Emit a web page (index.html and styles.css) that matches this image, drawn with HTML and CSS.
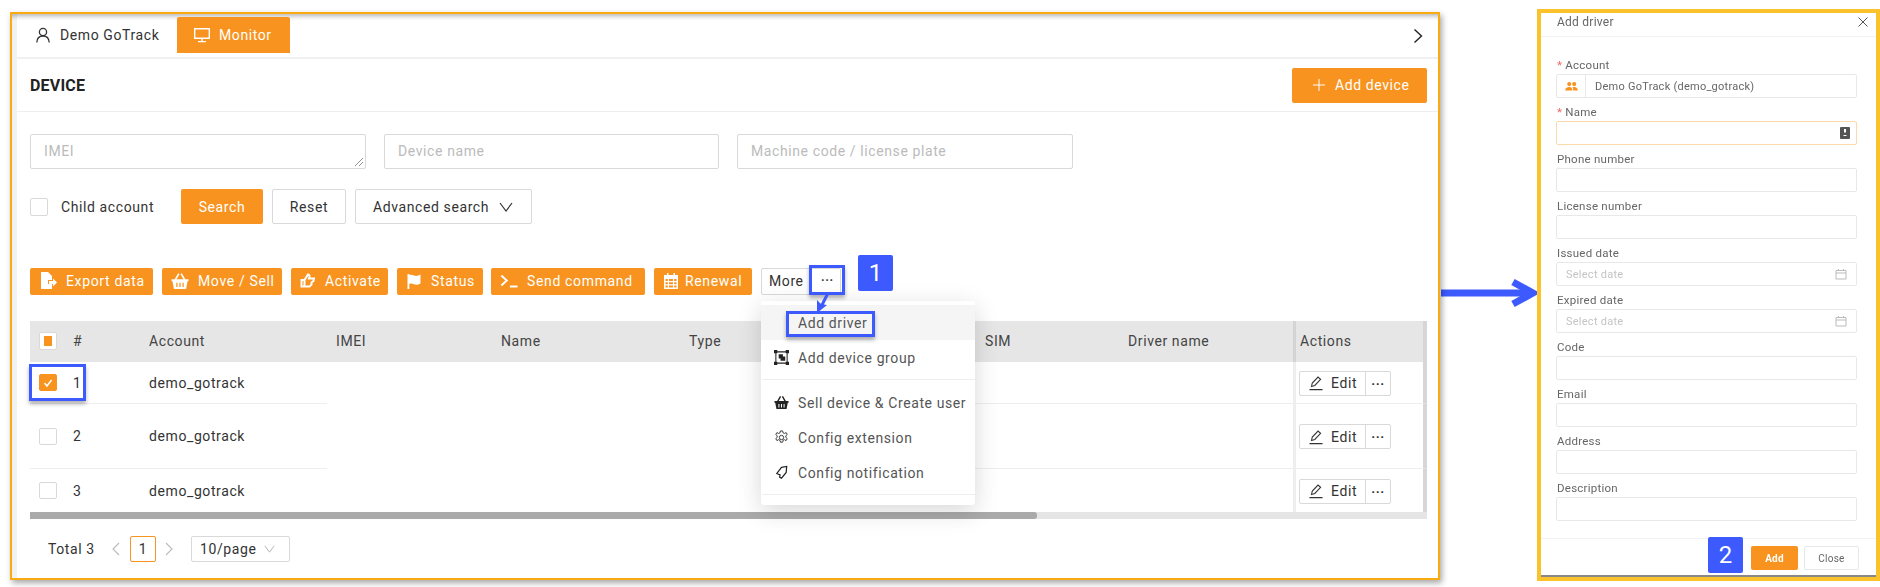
FILE: index.html
```html
<!DOCTYPE html>
<html lang="en">
<head>
<meta charset="utf-8">
<title>Add driver</title>
<link rel="stylesheet" href="styles.css">
</head>
<body>
<svg class="defs" width="0" height="0" aria-hidden="true">
  <defs>
    <symbol id="i-basket" viewBox="0 0 16 16"><path fill="currentColor" fill-rule="evenodd" d="M.5 6.5h15v1.8h-.8L13.4 15H2.6L1.3 8.300H.5zM4.700 9.500v3.800h1.100V9.500zM7.450 9.500v3.800h1.100V9.500zM10.200 9.500v3.800h1.100V9.500z"/><path fill="none" stroke="currentColor" stroke-width="1.500" d="M3.800 7 7 1.500M12.200 7 9 1.500"/></symbol>
    <symbol id="i-pen" viewBox="0 0 16 16"><path fill="none" stroke="currentColor" stroke-width="1.100" d="M3.500 11.500 4.300 8 10 2l2.600 2.400-5.800 6.100zM1.500 14.600h13"/></symbol>
    <symbol id="i-cal" viewBox="0 0 12 12"><path fill="none" stroke="#bbb" d="M1 2.500h10v8.500H1zM1 5h10M3.500 1v2M8.500 1v2"/></symbol>
  </defs>
</svg>
<main class="canvas">
  <section class="frame">
    <div class="app">
      <nav class="tabs">
        <div class="tab">
          <svg class="ico16" viewBox="0 0 16 16"><circle cx="8" cy="5" r="3.600" fill="none" stroke="#333" stroke-width="1.300"/><path fill="none" stroke="#333" stroke-width="1.300" d="M1.800 15.500c.2-4 2.600-6.500 6.200-6.500s6 2.500 6.200 6.500"/></svg>
          <span>Demo GoTrack</span>
        </div>
        <div class="tab tab-active">
          <svg class="ico16" viewBox="0 0 16 16"><path fill="none" stroke="#fff" stroke-width="1.400" d="M.7 1.700h14.600v9.600H.7zM8 11.500v3M4 14.600h8"/></svg>
          <span>Monitor</span>
        </div>
        <svg class="tabs-next" viewBox="0 0 10 16"><path fill="none" stroke="#222" stroke-width="1.400" d="m1.500 1.500 7 6.500-7 6.500"/></svg>
      </nav>
      <header class="head">
        <h1 class="title">DEVICE</h1>
        <button class="btn-add">
          <svg class="ico12" viewBox="0 0 12 12"><path fill="none" stroke="#fff" d="M6 0v12M0 6h12"/></svg>
          <span>Add device</span>
        </button>
      </header>
      <div class="filters">
        <div class="inp inp-area">IMEI
          <svg class="grip" viewBox="0 0 10 10"><path fill="none" stroke="#777" stroke-width=".8" d="M1 9 9 1M5 9l4-4"/></svg>
        </div>
        <div class="inp inp-name">Device name</div>
        <div class="inp">Machine code / license plate</div>
      </div>
      <div class="search">
        <span class="check"></span>
        <span class="child">Child account</span>
        <button class="btn btn-search">Search</button>
        <button class="btn btn-reset">Reset</button>
        <button class="btn btn-adv">Advanced search
          <svg class="ico-chev" viewBox="0 0 14 10"><path fill="none" stroke="#333" stroke-width="1.200" d="m1 1 6 8 6-8"/></svg>
        </button>
      </div>
      <div class="toolbar">
        <button class="tool tool-export">
          <svg class="ico18" viewBox="0 0 18 18"><path fill="#fff" d="M2 0h7l4 4v4H9v4h4v5H2z"/><path fill="#fff" d="M10 9h4V6.500l4 4-4 4V12h-4z"/></svg>
          <span>Export data</span>
        </button>
        <button class="tool tool-move">
          <svg class="ico18"><use href="#i-basket"/></svg>
          <span>Move / Sell</span>
        </button>
        <button class="tool tool-activate">
          <svg class="ico16" viewBox="0 0 16 16"><path fill="none" stroke="#fff" stroke-width="2" d="M1.500 7h3v6.500h-3zM4.500 7 8 1.500c1.300.3 1.800 1.200 1.500 2.500L9 5.500h5l-.5 2.500-2 1.500v2L9.500 13.500h-5"/></svg>
          <span>Activate</span>
        </button>
        <button class="tool tool-status">
          <svg class="ico16" viewBox="0 0 16 16"><path fill="#fff" d="M1.500 1h1.800v15H1.500zM3.300 2c3-1 5 1.500 8 .8 1-.2 2-.600 3.200-1.300v9c-3 2-5.500 1.300-7.500.500-1.300-.500-2.500-.600-3.700 0z"/></svg>
          <span>Status</span>
        </button>
        <button class="tool tool-send">
          <svg class="ico18" viewBox="0 0 20 16"><path fill="none" stroke="#fff" stroke-width="2.200" d="m1.500 2 6 5.500-6 5.500M11 14h8.500"/></svg>
          <span>Send command</span>
        </button>
        <button class="tool tool-renew">
          <svg class="ico16" viewBox="0 0 14 16"><path fill="#fff" fill-rule="evenodd" d="M3 0h1.500v2h5V0H11v2h3v14H0V2h3zM1.500 6v2h2.300V6zM5 6v2h4V6zM10.200 6v2h2.300V6zM1.500 9.200v2h2.300v-2zM5 9.200v2h4v-2zM10.200 9.200v2h2.300v-2zM1.500 12.400v2h2.300v-2zM5 12.400v2h4v-2zM10.200 12.400v2h2.300v-2z"/></svg>
          <span>Renewal</span>
        </button>
        <div class="more"><span class="more-label">More</span><span class="more-dots">···</span></div>
      </div>
      <div class="table">
        <div class="tr th">
          <div class="cell"><span class="check check-some"></span></div>
          <div class="cell">#</div>
          <div class="cell">Account</div>
          <div class="cell cell-imei">IMEI</div>
          <div class="cell">Name</div>
          <div class="cell">Type</div>
          <div class="cell cell-sim">SIM</div>
          <div class="cell">Driver name</div>
          <div class="cell cell-act">Actions</div>
        </div>
        <div class="tr row-1">
          <div class="cell line"><span class="check check-on"><svg viewBox="0 0 12 12"><path fill="none" stroke="#fff" stroke-width="1.500" d="m2.500 6 2.500 3 4.500-6"/></svg></span></div>
          <div class="cell line">1</div>
          <div class="cell line">demo_gotrack</div>
          <div class="cell gap"></div>
          <div class="cell line blank"></div>
          <div class="cell cell-act line"><div class="edit"><span class="edit-main"><svg class="ico16"><use href="#i-pen"/></svg>Edit</span><span class="edit-more">···</span></div></div>
        </div>
        <div class="tr row-2">
          <div class="cell line"><span class="check"></span></div>
          <div class="cell line">2</div>
          <div class="cell line">demo_gotrack</div>
          <div class="cell gap"></div>
          <div class="cell line blank"></div>
          <div class="cell cell-act line"><div class="edit"><span class="edit-main"><svg class="ico16"><use href="#i-pen"/></svg>Edit</span><span class="edit-more">···</span></div></div>
        </div>
        <div class="tr row-3">
          <div class="cell"><span class="check"></span></div>
          <div class="cell">3</div>
          <div class="cell">demo_gotrack</div>
          <div class="cell gap"></div>
          <div class="cell blank"></div>
          <div class="cell cell-act"><div class="edit"><span class="edit-main"><svg class="ico16"><use href="#i-pen"/></svg>Edit</span><span class="edit-more">···</span></div></div>
        </div>
        <div class="hscroll"><div class="hthumb"></div></div>
      </div>
      <div class="pager">
        <span class="total">Total 3</span>
        <svg class="pg-arrow" viewBox="0 0 8 14"><path fill="none" stroke="#bbb" stroke-width="1.100" d="M7 1 1 7l6 6"/></svg>
        <span class="pg-num">1</span>
        <svg class="pg-arrow" viewBox="0 0 8 14"><path fill="none" stroke="#bbb" stroke-width="1.100" d="m1 1 6 6-6 6"/></svg>
        <span class="pg-size">10/page
          <svg class="ico-chev" viewBox="0 0 14 10"><path fill="none" stroke="#aaa" stroke-width="1.100" d="m1 1 6 8 6-8"/></svg>
        </span>
      </div>
    </div>

    <div class="menu">
      <div class="mi mi-hover"><span class="mi-ico"></span>Add driver</div>
      <div class="mi"><svg class="mi-ico" viewBox="0 0 16 16"><path fill="none" stroke="#222" stroke-width="1.100" d="M2 2h12v12H2z"/><path fill="#222" d="M0 0h3.500v3.500H0zM12.500 0H16v3.500h-3.500zM0 12.500h3.500V16H0zM12.500 12.500H16V16h-3.500zM5 4.500h4.500V7H12v4.500H7V9H5z"/></svg>Add device group</div>
      <div class="sep"></div>
      <div class="mi"><svg class="mi-ico"><use href="#i-basket"/></svg>Sell device &amp; Create user</div>
      <div class="mi"><svg class="mi-ico" viewBox="0 0 16 16"><circle cx="8" cy="8" r="2.300" fill="none" stroke="#333"/><path fill="none" stroke="#333" d="M6.800 1h2.400l.4 2 1.500.700 1.800-1 1.200 2.100-1.500 1.300v1.800l1.500 1.300-1.200 2.100-1.800-1-1.500.7-.4 2H6.800l-.4-2-1.500-.7-1.800 1-1.200-2.100 1.500-1.300V6.100L1.900 4.800l1.200-2.100 1.800 1 1.500-.7z"/></svg>Config extension</div>
      <div class="mi"><svg class="mi-ico" viewBox="0 0 16 16"><path fill="none" stroke="#222" stroke-width="1.300" d="M8 2.500 13.500 1.500 13 8l-5 6-2-1 .5-2.500L3 9z"/></svg>Config notification</div>
      <div class="sep"></div>
    </div>

    <div class="mark mark-dots"></div>
    <div class="mark mark-row"></div>
    <div class="mark mark-menu"></div>
    <svg class="pointer" viewBox="0 0 20 22"><path fill="none" stroke="#3d5afe" stroke-width="3" d="M16 0 9 14"/><path fill="#3d5afe" d="M5 20V7l4 4 6 1z"/></svg>
    <div class="badge badge-1">1</div>
  </section>

  <svg class="flow-arrow" viewBox="0 0 97 30"><path fill="none" stroke="#3d5afe" stroke-width="7" d="M1 15h90"/><path fill="none" stroke="#3d5afe" stroke-width="7" d="m73 4 20 11-20 11"/></svg>

  <aside class="modal-frame">
    <div class="modal">
      <header class="m-head"><span>Add driver</span>
        <svg class="m-close" viewBox="0 0 10 10"><path fill="none" stroke="#555" d="m.5.500 9 9m0-9-9 9"/></svg>
      </header>
      <div class="m-form">
        <div class="fld"><label class="lbl req">Account</label>
          <div class="box box-acc"><span class="acc-ico"><svg viewBox="0 0 14 10"><path fill="#f7931e" d="M4.500 0a2.300 2.300 0 0 1 0 4.600 2.300 2.300 0 0 1 0-4.600zM10 0a2.300 2.300 0 0 1 0 4.600A2.300 2.300 0 0 1 10 0zM0 9.500C0 7 2 5.500 4.500 5.500S8 7 8 9.500zM9 9.500C9 7.500 8.500 6.500 8 5.800c.5-.2 1.200-.3 2-.3 2.500 0 4 1.500 4 4z"/></svg></span><span class="acc-val">Demo GoTrack (demo_gotrack)</span></div></div>
        <div class="fld"><label class="lbl req">Name</label>
          <div class="box box-focus"><svg class="contact" viewBox="0 0 10 12"><path fill="#555" fill-rule="evenodd" d="M0 1a1 1 0 0 1 1-1h8a1 1 0 0 1 1 1v10a1 1 0 0 1-1 1H1a1 1 0 0 1-1-1zM4 2v3l1 1 1-1V2zM3.500 8h3v1h-3z"/></svg></div></div>
        <div class="fld"><label class="lbl">Phone number</label><div class="box"></div></div>
        <div class="fld"><label class="lbl">License number</label><div class="box"></div></div>
        <div class="fld"><label class="lbl">Issued date</label><div class="box box-date"><span>Select date</span><svg class="m-cal"><use href="#i-cal"/></svg></div></div>
        <div class="fld"><label class="lbl">Expired date</label><div class="box box-date"><span>Select date</span><svg class="m-cal"><use href="#i-cal"/></svg></div></div>
        <div class="fld"><label class="lbl">Code</label><div class="box"></div></div>
        <div class="fld"><label class="lbl">Email</label><div class="box"></div></div>
        <div class="fld"><label class="lbl">Address</label><div class="box"></div></div>
        <div class="fld"><label class="lbl">Description</label><div class="box"></div></div>
      </div>
      <footer class="m-foot">
        <button class="m-btn m-ok">Add</button>
        <button class="m-btn m-close-btn">Close</button>
      </footer>
    </div>
    <div class="badge badge-2">2</div>
  </aside>
</main>
</body>
</html>
```

FILE: styles.css
```css
* { box-sizing: border-box; }
html, body { margin: 0; height: 587px; overflow: hidden; background: #fff; }
body { font-family: Roboto, "Liberation Sans", sans-serif; font-size: 14px; letter-spacing: .6px; color: #333; }
button { font: inherit; letter-spacing: inherit; cursor: pointer; }
.defs { position: absolute; }
.ico16 { width: 16px; height: 16px; flex: none; }
.ico18 { width: 18px; height: 18px; flex: none; }
.ico12 { width: 12px; height: 12px; flex: none; }
.ico-chev { width: 14px; height: 10px; flex: none; }

.canvas { display: flex; align-items: flex-start; height: 587px; }

/* left frame */
.frame { position: relative; width: 1430px; height: 568px; margin: 12px 0 0 10px; border: 2px solid #f9ab10; box-shadow: 2px 3px 6px rgba(0,0,0,.35); background: #fff; flex: none; }
.app { height: 100%; padding-left: 5px; background: linear-gradient(#f2f2f2, #f2f2f2) left top / 5px 100% no-repeat, #fff; box-shadow: inset 0 6px 5px -4px rgba(0,0,0,.3); }

.tabs { display: flex; align-items: flex-start; height: 45px; padding-left: 13px; border-bottom: 2px solid #f0f0f0; position: relative; }
.tab { display: flex; align-items: center; gap: 9px; height: 36px; margin-top: 3px; padding: 0 5px; width: 142px; }
.tab-active { width: 113px; padding-left: 17px; color: #fff; background: #f7931e; border-radius: 2px 2px 0 0; margin-left: 5px; }
.tabs-next { width: 10px; height: 16px; margin: 14px 0 0 auto; position: absolute; right: 15px; top: 0; }

.head { display: flex; align-items: center; justify-content: space-between; height: 53px; padding: 0 11px 0 13px; border-bottom: 1px solid #eee; }
.title { margin: 0; font-size: 16px; font-weight: 700; color: #222; letter-spacing: .2px; }
.btn-add { display: flex; align-items: center; gap: 10px; height: 35px; width: 135px; padding: 0 0 0 21px; border: 0; border-radius: 2px; color: #fff; background: #f7931e; }

.filters { display: flex; gap: 18px; padding: 22px 0 0 13px; }
.inp { position: relative; width: 336px; height: 35px; padding-left: 13px; line-height: 33px; color: #bbb; border: 1px solid #d9d9d9; border-radius: 2px; }
.inp-name { width: 335px; }
.grip { position: absolute; right: 1px; bottom: 1px; width: 10px; height: 10px; }

.search { display: flex; align-items: center; height: 35px; margin-top: 20px; padding-left: 13px; }
.check { display: inline-flex; align-items: center; justify-content: center; width: 18px; height: 18px; background: #fff; border: 1px solid #d9d9d9; border-radius: 2px; flex: none; }
.child { width: 120px; padding-left: 13px; margin-right: 13px; }
.btn { height: 35px; padding: 0; border-radius: 2px; background: #fff; border: 1px solid #d9d9d9; color: #333; margin-right: 9px; }
.btn-search { width: 82px; border: 0; color: #fff; background: #f7931e; }
.btn-reset { width: 74px; }
.btn-adv { display: flex; align-items: center; gap: 10px; width: 177px; padding-left: 17px; }

.toolbar { display: flex; align-items: flex-start; gap: 9px; height: 27px; margin-top: 44px; padding-left: 13px; }
.tool { display: flex; align-items: center; gap: 9px; height: 27px; padding: 0 0 1px 9px; border: 0; border-radius: 2px; color: #fff; background: #f7931e; white-space: nowrap; letter-spacing: .65px; }
.tool-export { width: 123px; }
.tool-move { width: 120px; }
.tool-activate { width: 97px; }
.tool-status { width: 86px; }
.tool-send { width: 154px; margin-left: -1px; }
.tool-renew { width: 98px; gap: 6px; }
.more { display: flex; align-items: center; height: 27px; width: 80px; padding: 0 0 1px 7px; border: 1px solid #d9d9d9; border-radius: 2px; }
.more-label { width: 52px; }
.more-dots { font-weight: 700; font-size: 12px; }

.table { margin: 26px 0 0 13px; width: 1397px; }
.tr { display: grid; grid-template-columns: 43px 76px 178px 174px 188px 286px 153px 165px 134px; align-items: stretch; }
.cell { display: flex; align-items: center; min-width: 0; }
.tr > .cell:first-child { padding-left: 9px; }
.th { height: 41px; background: #e6e6e6; color: #444; }
.th .cell { padding-bottom: 1px; }
.th .cell-imei { padding-left: 9px; }
.th .cell-sim { padding-left: 10px; }
.gap { grid-column: span 3; }
.blank { grid-column: span 2; }
.row-1 { height: 42px; }
.row-2 { height: 65px; }
.row-3 { height: 43px; }
.line { border-bottom: 1px solid #eee; }
.cell-act { padding-left: 3px; border-left: 3px solid #eee; border-right: 4px solid #d6d6d6; }
.th .cell-act { border-left-color: #d4d4d4; padding-left: 4px; }
.row-1 .check, .row-2 .check, .row-3 .check { height: 17px; }
.check-some::after { content: ""; width: 8px; height: 10px; background: #f7931e; }
.check-on { background: #f7931e; border-color: #f7931e; }
.check-on svg { width: 12px; height: 12px; }
.edit { display: flex; width: 92px; height: 25px; border: 1px solid #d9d9d9; border-radius: 2px; margin-top: 1px; }
.edit-main { display: flex; align-items: center; gap: 7px; width: 66px; padding-left: 8px; border-right: 1px solid #d9d9d9; }
.edit-more { flex: 1; text-align: center; line-height: 23px; font-weight: 700; font-size: 13px; }

.hscroll { height: 7px; background: #e5e5e5; }
.hthumb { width: 1007px; height: 7px; background: #aaa; border-radius: 0 3px 3px 0; }

.pager { display: flex; align-items: center; height: 26px; margin-top: 17px; padding-left: 31px; }
.total { width: 64px; }
.pg-arrow { width: 8px; height: 14px; flex: none; }
.pg-num { width: 26px; height: 26px; margin: 0 9px 0 10px; line-height: 24px; text-align: center; border: 1px solid #f7931e; border-radius: 2px; }
.pg-size { display: flex; align-items: center; gap: 8px; width: 99px; height: 26px; margin-left: 18px; padding-left: 8px; border: 1px solid #d9d9d9; border-radius: 2px; }
.pg-size svg { width: 11px; height: 8px; }

/* dropdown */
.menu { position: absolute; left: 749px; top: 287px; width: 214px; height: 204px; padding-top: 4px; background: #fff; border-radius: 3px; box-shadow: 0 6px 24px rgba(0,0,0,.16); color: #555; }
.mi { display: flex; align-items: center; gap: 9px; height: 35px; padding-left: 13px; white-space: nowrap; }
.mi-hover { background: #f5f5f5; }
.mi-ico { display: block; width: 15px; height: 15px; flex: none; color: #222; }
.sep { height: 1px; margin: 4px 0 5px 1px; background: #eee; }
.sep:last-child { margin-bottom: 0; }

.mark { position: absolute; border: 3px solid #3d5afe; box-shadow: 0 3px 4px rgba(0,0,0,.3); }
.mark-dots { left: 797px; top: 251px; width: 36px; height: 30px; }
.mark-row { left: 17px; top: 350px; width: 57px; height: 37px; }
.mark-menu { left: 774px; top: 297px; width: 89px; height: 26px; }
.pointer { position: absolute; left: 800px; top: 279px; width: 20px; height: 22px; }
.badge { position: absolute; display: flex; align-items: center; justify-content: center; width: 35px; height: 36px; color: #fff; background: #3d5afe; border-radius: 2px; font-size: 24px; letter-spacing: 0; }
.badge-1 { left: 846px; top: 241px; }
.badge-2 { left: 167px; top: 524px; }

.flow-arrow { width: 97px; height: 30px; margin-top: 278px; flex: none; }

/* modal */
.modal-frame { position: relative; width: 343px; height: 572px; margin-top: 9px; border: 4px solid #fcc22c; flex: none; background: #fff; }
.modal { height: 100%; display: flex; flex-direction: column; font-size: 12px; letter-spacing: .25px; color: #666; filter: blur(.4px); }
.m-head { display: flex; align-items: center; justify-content: space-between; height: 24px; padding: 0 8px 6px 16px; border-bottom: 1px solid #f2f2f2; }
.m-close { width: 10px; height: 10px; }
.m-form { display: flex; flex-direction: column; padding: 14px 19px 0 15px; }
.fld { height: 47px; }
.lbl { display: block; height: 23px; padding: 4px 0 0 1px; line-height: 20px; font-size: 11.500px; }
.req::before { content: "* "; color: #e66; }
.box { position: relative; display: flex; align-items: center; justify-content: space-between; height: 24px; padding: 0 9px; border: 1px solid #e8e8e8; border-radius: 2px; }
.box-acc { justify-content: flex-start; padding: 0; }
.acc-ico { display: flex; align-items: center; justify-content: center; width: 29px; height: 100%; border-right: 1px solid #e8e8e8; }
.acc-ico svg { width: 13px; height: 9px; }
.acc-val { padding-left: 9px; font-size: 11px; }
.box-focus { justify-content: flex-end; padding-right: 6px; border-color: #fbd9ab; }
.contact { width: 10px; height: 12px; }
.box-date { color: #c4c4c4; font-size: 11px; }
.m-cal { width: 12px; height: 12px; }
.m-foot { display: flex; justify-content: flex-end; gap: 6px; height: 39px; margin-top: auto; padding: 7px 17px 0 0; border-top: 1px solid #f2f2f2; border-bottom: 2px solid #888; }
.m-btn { width: 47px; height: 24px; padding: 0; border-radius: 2px; font-size: 10px; }
.m-ok { border: 0; color: #fff; background: #f7931e; font-weight: 700; }
.m-close-btn { width: 55px; border: 1px solid #e8e8e8; color: #666; background: #fff; }
```
